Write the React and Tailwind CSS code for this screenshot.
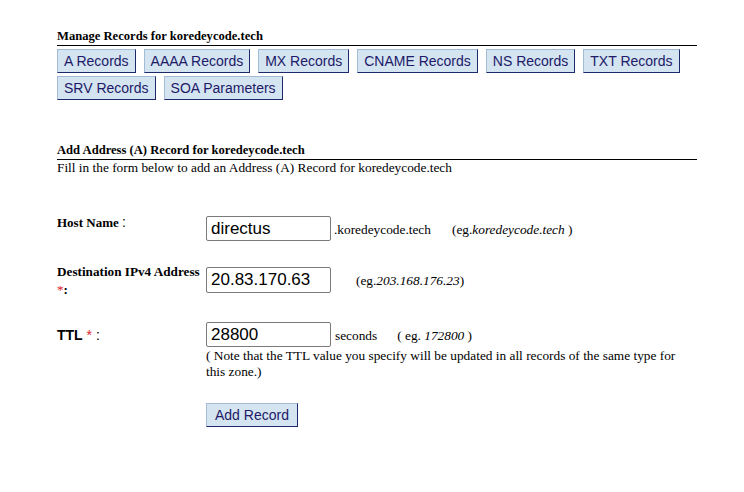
import React from "react";

const tabs = [
  "A Records",
  "AAAA Records",
  "MX Records",
  "CNAME Records",
  "NS Records",
  "TXT Records",
  "SRV Records",
  "SOA Parameters",
];

function NavButton({ children, wide }) {
  return (
    <button
      className={
        wide
          ? "h-[24px] px-[8px] bg-[#d5e4f1] border border-t-[#a3bcd6] border-l-[#a3bcd6] border-b-[#1c2a6b] border-r-[#1c2a6b] text-[14px] leading-none text-[#201a68] font-['Liberation_Sans',Arial,sans-serif]"
          : "h-[24px] px-[6px] bg-[#d5e4f1] border border-t-[#a3bcd6] border-l-[#a3bcd6] border-b-[#1c2a6b] border-r-[#1c2a6b] text-[14px] leading-none text-[#201a68] font-['Liberation_Sans',Arial,sans-serif]"
      }
    >
      {children}
    </button>
  );
}

export default function App() {
  return (
    <div className="w-[744px] h-[492px] bg-white pl-[57px] pt-[29px] text-[13.33px] text-black font-['Liberation_Serif','Times_New_Roman',serif]">
      <div className="w-[640px]">
        {/* Manage records */}
        <h2 className="text-[12.6px] font-bold leading-[15px] pb-px border-b border-black">
          Manage Records for koredeycode.tech
        </h2>
        <div className="flex flex-wrap gap-x-[8px] gap-y-[3px] mt-[3px] w-[630px]">
          {tabs.map((t) => (
            <NavButton key={t}>{t}</NavButton>
          ))}
        </div>

        {/* Add record form */}
        <h2 className="mt-[43px] text-[12.6px] font-bold leading-[15px] pb-px border-b border-black">
          Add Address (A) Record for koredeycode.tech
        </h2>
        <p className="leading-[15px]">Fill in the form below to add an Address (A) Record for koredeycode.tech</p>

        <div className="flex mt-[39px]">
          <div className="w-[149px] text-[13px] font-bold leading-[16px]">
            Host Name <span className="font-normal font-['Liberation_Sans',sans-serif] text-[14px]">:</span>
          </div>
          <div className="flex items-baseline mt-[2px]">
            <input
              defaultValue="directus"
              className="w-[125px] h-[25px] px-[4px] border border-[#7a7a7a] rounded-[2px] text-[17px] font-['Liberation_Sans',sans-serif] outline-none"
            />
            <span className="ml-[3px]">.koredeycode.tech</span>
            <span className="ml-[21px]">
              (eg.<i>koredeycode.tech</i> )
            </span>
          </div>
        </div>

        <div className="flex mt-[22px]">
          <div className="w-[149px] text-[13.2px] font-bold leading-[18px]">
            Destination IPv4 Address
            <br />
            <span className="text-[#e0202a] font-normal">*</span>:
          </div>
          <div className="flex items-baseline mt-[4px]">
            <input
              defaultValue="20.83.170.63"
              className="w-[125px] h-[26px] px-[4px] border border-[#7a7a7a] rounded-[2px] text-[17px] font-['Liberation_Sans',sans-serif] outline-none"
            />
            <span className="ml-[25px]">
              (eg.<i>203.168.176.23</i>)
            </span>
          </div>
        </div>

        <div className="flex mt-[23px]">
          <div className="w-[149px] pt-[5px] leading-[16px] text-[14px] font-['Liberation_Sans',sans-serif]">
            <b>TTL</b> <span className="text-[#e0202a]">*</span> :
          </div>
          <div className="w-[480px]">
            <div className="flex items-baseline">
              <input
                defaultValue="28800"
                className="w-[125px] h-[25px] px-[4px] border border-[#7a7a7a] rounded-[2px] text-[17px] font-['Liberation_Sans',sans-serif] outline-none"
              />
              <span className="ml-[4px]">seconds</span>
              <span className="ml-[20px]">
                ( eg. <i>172800</i> )
              </span>
            </div>
            <p className="leading-[16px] mt-[1px]">
              ( Note that the TTL value you specify will be updated in all records of the same type for this zone.)
            </p>
            <div className="mt-[23px]">
              <NavButton wide>Add Record</NavButton>
            </div>
          </div>
        </div>
      </div>
    </div>
  );
}
